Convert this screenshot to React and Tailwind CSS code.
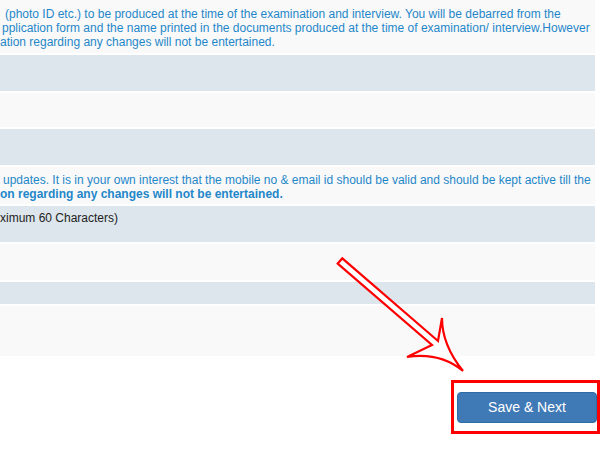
export default function App() {
  const light = "bg-[#f9f9f9]";
  const dark = "bg-[#dde6ed]";
  return (
    <div
      className="relative w-[600px] h-[450px] overflow-hidden bg-white"
      style={{ fontFamily: '"Liberation Sans", Arial, sans-serif' }}
    >
      <div className="flex w-[595px] flex-col gap-[2px]">
        <div className={`${light} h-[53px] pt-[7px] text-[12px] leading-[14px] text-[#1f87c9] whitespace-nowrap`}>
          <div className="pl-[5px]">(photo ID etc.) to be produced at the time of the examination and interview. You will be debarred from the</div>
          <div className="pl-[2px]">pplication form and the name printed in the documents produced at the time of examination/ interview.However</div>
          <div>ation regarding any changes will not be entertained.</div>
        </div>
        <div className={`${dark} h-[36px]`} />
        <div className={`${light} h-[34px]`} />
        <div className={`${dark} h-[36px]`} />
        <div className={`${light} h-[37px] pt-[6px] text-[12px] leading-[14px] text-[#1f87c9] whitespace-nowrap`}>
          <div className="pl-[3px]">updates. It is in your own interest that the mobile no &amp; email id should be valid and should be kept active till the</div>
          <div className="font-bold">on regarding any changes will not be entertained.</div>
        </div>
        <div className={`${dark} h-[36px] pt-[5px] text-[12px] leading-[14px] text-[#222]`}>
          <div>ximum 60 Characters)</div>
        </div>
        <div className={`${light} h-[36px]`} />
        <div className={`${dark} h-[22px]`} />
        <div className={`${light} h-[50px]`} />
      </div>

      <div className="mt-[36px] flex justify-end pr-[3px]">
        <button className="h-[31px] w-[140px] rounded-[4px] border border-[#2e6da4] bg-[#3f79b6] text-[14px] text-white">
          Save &amp; Next
        </button>
      </div>

      <div className="absolute left-[451px] top-[380px] h-[54px] w-[149px] border-[3px] border-[#ff0000]" />

      <svg className="absolute left-0 top-0" width="600" height="450" viewBox="0 0 600 450">
        <path
          d="M337.7 263.6 L342.3 258.4 L438 341 L442 318 Q442 345 463 371 Q440 352 407 357 L432 345 Z"
          fill="#ffffff"
          stroke="#ff0000"
          strokeWidth="2.2"
          strokeLinejoin="miter"
        />
      </svg>
    </div>
  );
}
